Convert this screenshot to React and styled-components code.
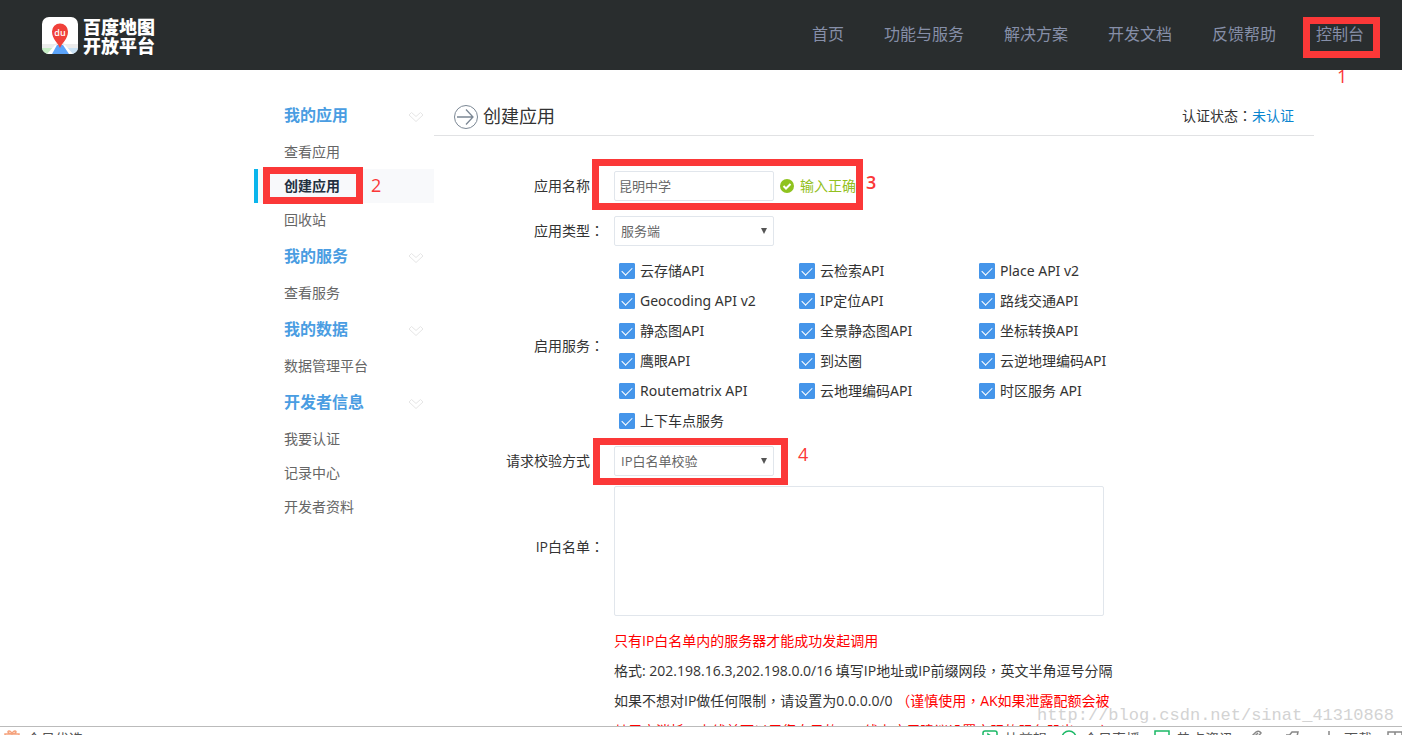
import React from 'react'
import styled, { createGlobalStyle, css } from 'styled-components'

const RED = '#fb3838'

const GlobalStyle = createGlobalStyle`
  * {
    box-sizing: border-box;
  }
  body {
    margin: 0;
    background: #fff;
    color: #333;
    font: 14px/20px 'Open Sans', 'Noto Sans CJK SC', sans-serif;
  }
  a {
    color: inherit;
    text-decoration: none;
  }
  button, input, select, textarea {
    font-family: inherit;
  }
`

const Page = styled.div`
  height: 100vh;
  display: flex;
  flex-direction: column;
  overflow: hidden;
  position: relative;
`

/* header */

const Header = styled.header`
  flex: 0 0 70px;
  display: flex;
  align-items: center;
  justify-content: space-between;
  padding: 0 38px 0 42px;
  background: #292d2e;
`

const Logo = styled.a`
  display: flex;
  align-items: center;
  gap: 5px;
  padding-top: 2px;
  color: #fff;
  font: 900 18px/19px 'Noto Sans CJK SC', sans-serif;
`

const LogoText = styled.span`
  display: flex;
  flex-direction: column;
`

const Nav = styled.nav`
  display: flex;
  gap: 40px;
  color: #868fa8;
  font-size: 16px;
  line-height: 24px;
  padding-bottom: 2px;
`

const NavLink = styled.a`
  position: relative;
`

/* numbered red marks laid over the page */

const Mark = styled.span`
  position: absolute;
  z-index: 2;
  top: ${p => p.$top}px;
  left: ${p => p.$left}px;
  width: ${p => p.$width}px;
  height: ${p => p.$height}px;
  border: 7px solid ${RED};
  pointer-events: none;
`

const MarkNumber = styled.span`
  position: absolute;
  z-index: 2;
  top: ${p => p.$top}px;
  left: ${p => p.$left}px;
  color: ${RED};
  font-size: 18px;
  font-weight: ${p => (p.$bold ? 600 : 400)};
  line-height: 20px;
`

/* sidebar */

const Body = styled.div`
  flex: 1;
  min-height: 0;
  overflow: hidden;
  display: flex;
  padding: 26px 88px 0 254px;
`

const Sidebar = styled.aside`
  flex: 0 0 180px;
`

const GroupTitle = styled.button`
  display: flex;
  align-items: center;
  justify-content: space-between;
  width: 100%;
  height: 39px;
  padding: 0 10px 2px 30px;
  border: 0;
  background: none;
  color: #4a9de2;
  font-size: 16px;
  font-weight: 700;
  line-height: 24px;
`

const SideLink = styled.a`
  position: relative;
  display: block;
  padding-left: 30px;
  color: #666;
  line-height: 34px;
  ${p => p.$active && css`
    padding-left: 26px;
    border-left: 4px solid #0bb5ec;
    background: #f8f9fb;
    color: #22303f;
    font-weight: 700;
  `}
`

/* content */

const Content = styled.main`
  flex: 1;
  min-width: 0;
`

const TitleBar = styled.div`
  display: flex;
  align-items: center;
  justify-content: space-between;
  height: 40px;
  padding: 0 20px;
  border-bottom: 1px solid #e1e2e4;
`

const Title = styled.h1`
  display: flex;
  align-items: center;
  gap: 5px;
  margin: 0;
  font-size: 18px;
  font-weight: 400;
  line-height: 24px;
`

const BlueLink = styled.a`
  color: #0a85d0;
`

/* the traditional face centres its punctuation */
const Centered = styled.span`
  font-family: 'Noto Sans CJK TC', sans-serif;
  line-height: 1;
`

const Form = styled.form`
  display: grid;
  gap: 10px;
  padding-top: 35px;
`

const Row = styled.div`
  position: relative;
  display: grid;
  grid-template-columns: 170px 1fr;
  column-gap: 10px;
  align-items: center;
  margin-bottom: ${p => (p.$loose ? 5 : 0)}px;
`

const Label = styled.label`
  text-align: right;
  padding-bottom: ${p => (p.$raised ? 8 : 0)}px;
`

const Field = styled.div`
  display: flex;
  align-items: center;
`

const control = css`
  border: 1px solid #e1e6ec;
  border-radius: 2px;
  background: #fff;
  color: #666;
  font-size: 13px;
  outline: 0;
`

const TextInput = styled.input`
  ${control}
  width: 160px;
  height: 30px;
  padding: 0 4px 2px;
`

const SelectBox = styled.span`
  position: relative;
  display: inline-flex;

  &::after {
    content: '';
    position: absolute;
    top: 12px;
    right: 7px;
    border: 3px solid transparent;
    border-top: 6px solid #555;
    border-bottom: 0;
    pointer-events: none;
  }
`

const Select = styled.select`
  ${control}
  appearance: none;
  width: 160px;
  height: 30px;
  padding: 0 20px 0 6px;
`

const Valid = styled.span`
  display: flex;
  align-items: center;
  gap: 6px;
  margin-left: 6px;
  color: #92c020;
`

const Services = styled.div`
  display: grid;
  grid-template-columns: repeat(3, 180px);
  padding-left: 5px;
  font-family: 'Noto Sans', 'Noto Sans CJK SC', sans-serif;
`

const Service = styled.label`
  display: flex;
  align-items: center;
  gap: 5px;
  height: 30px;
`

const Check = styled.input`
  appearance: none;
  width: 16px;
  height: 16px;
  margin: 0;
  border: 1px solid #4595ea;
  border-radius: 1px;
  display: grid;
  place-items: center;

  &:checked {
    background: #4595ea;
  }
  &:checked::after {
    content: '';
    width: 9px;
    height: 5px;
    border: solid #fff;
    border-width: 0 0 1px 1px;
    transform: translateY(-1px) rotate(-45deg);
  }
`

const TextArea = styled.textarea`
  ${control}
  display: block;
  width: 490px;
  height: 130px;
  resize: none;
`

const Hints = styled.div`
  margin-left: 180px;
  width: 500px;
  line-height: 30px;
`

const Hint = styled.p`
  margin: 0;
  white-space: nowrap;
`

const Warn = styled.span`
  color: #f00;
`

/* browser bar, mostly below the fold */

const BottomBar = styled.footer`
  flex: 0 0 9px;
  display: flex;
  justify-content: space-between;
  align-items: flex-start;
  overflow: hidden;
  padding: 2px 0 0 4px;
  border-top: 1px solid #bbb;
  color: #555;
`

const BarGroup = styled.div`
  display: flex;
  gap: 14px;
`

const BarItem = styled.a`
  display: flex;
  gap: 7px;
`

const BarTool = styled.a`
  display: flex;
  padding-right: 7px;
`

const Watermark = styled.span`
  position: absolute;
  right: 8px;
  bottom: 7px;
  z-index: 3;
  color: #d3d3d3;
  font: 17px/24px 'Liberation Mono', monospace;
`

const LogoIcon = () => (
  <svg width="36" height="38" viewBox="0 0 36 38">
    <defs>
      <clipPath id="tile"><rect x="0" y="0" width="36" height="37" rx="7" /></clipPath>
    </defs>
    <g clipPath="url(#tile)">
      <rect width="36" height="37" fill="#fff" />
      <path d="M0 27 L13 27 L18 24 L23 27 L36 27 V31 H0Z" fill="#ececec" />
      <path d="M0 31 H12 L6 37 H0Z" fill="#c4ecc4" />
      <path d="M36 31 H24 L30 37 H36Z" fill="#c9e2f5" />
      <path d="M13 28 H23 L31 37 H5Z" fill="#fff" />
      <path d="M15 28 H21 L27 37 H10Z" fill="#5ba4fa" />
      <path d="M18 31 C16 26 10 22 10 14.5 A8 8 0 0 1 26 14.5 C26 22 20 26 18 31Z" fill="#f0413a" />
    </g>
    <text x="18" y="19" textAnchor="middle" fill="#fff" fontFamily="Open Sans, sans-serif" fontSize="9" fontWeight="600">du</text>
  </svg>
)

const Chevron = () => (
  <svg width="16" height="18" viewBox="0 0 16 18" fill="#fff" stroke="#e6e6e6">
    <path d="M3.5 6.5 L8 10.5 L12.5 6.5 L15 9 L8 15.5 L1 9Z" strokeLinejoin="round" />
  </svg>
)

const ArrowIcon = () => (
  <svg width="24" height="26" viewBox="0 0 24 26" fill="none" stroke="#7b8794">
    <circle cx="12" cy="14" r="11.5" />
    <path d="M3 14 H18.5 M12 6.5 L19 14 L12 21.5" strokeWidth="1.3" />
  </svg>
)

const ValidIcon = () => (
  <svg width="14" height="14" viewBox="0 0 14 14">
    <circle cx="7" cy="7" r="7" fill="#8fc31f" />
    <path d="M3.5 7 L6 9.5 L10.5 5" fill="none" stroke="#fff" strokeWidth="2" />
  </svg>
)

const BarIcon = ({ color = '#888', children }) => (
  <svg width="16" height="16" viewBox="0 0 16 16" fill="none" stroke={color} strokeWidth="1.5">
    {children}
  </svg>
)

const nav = ['首页', '功能与服务', '解决方案', '开发文档', '反馈帮助', '控制台']

const groups = [
  { title: '我的应用', items: ['查看应用', '创建应用', '回收站'] },
  { title: '我的服务', items: ['查看服务'] },
  { title: '我的数据', items: ['数据管理平台'] },
  { title: '开发者信息', items: ['我要认证', '记录中心', '开发者资料'] },
]

const services = [
  '云存储API', '云检索API', 'Place API v2',
  'Geocoding API v2', 'IP定位API', '路线交通API',
  '静态图API', '全景静态图API', '坐标转换API',
  '鹰眼API', '到达圈', '云逆地理编码API',
  'Routematrix API', '云地理编码API', '时区服务 API',
  '上下车点服务',
]

export default function App() {
  return (
    <Page>
      <GlobalStyle />
      <Header>
        <Logo href="#">
          <LogoIcon />
          <LogoText>
            <span>百度地图</span>
            <span>开放平台</span>
          </LogoText>
        </Logo>
        <Nav>
          {nav.map(name => (
            <NavLink key={name} href="#">
              {name}
              {name === '控制台' && (
                <>
                  <Mark $top={-5} $left={-13} $width={77} $height={41} />
                  <MarkNumber $top={44} $left={21}>1</MarkNumber>
                </>
              )}
            </NavLink>
          ))}
        </Nav>
      </Header>

      <Body>
        <Sidebar>
          {groups.map(group => (
            <div key={group.title}>
              <GroupTitle type="button">
                {group.title}
                <Chevron />
              </GroupTitle>
              {group.items.map(item => (
                <SideLink key={item} href="#" $active={item === '创建应用'}>
                  {item}
                  {item === '创建应用' && (
                    <>
                      <Mark $top={-2} $left={5} $width={100} $height={37} />
                      <MarkNumber $top={6} $left={113}>2</MarkNumber>
                    </>
                  )}
                </SideLink>
              ))}
            </div>
          ))}
        </Sidebar>

        <Content>
          <TitleBar>
            <Title><ArrowIcon />创建应用</Title>
            <span>认证状态<Centered>：</Centered><BlueLink href="#">未认证</BlueLink></span>
          </TitleBar>

          <Form>
            <Row $loose>
              <Label htmlFor="name">应用名称<Centered>：</Centered></Label>
              <Field>
                <TextInput id="name" defaultValue="昆明中学" />
                <Valid><ValidIcon />输入正确</Valid>
              </Field>
              <Mark $top={-12} $left={158} $width={271} $height={51} />
              <MarkNumber $top={1} $left={432} $bold>3</MarkNumber>
            </Row>
            <Row>
              <Label htmlFor="type">应用类型<Centered>：</Centered></Label>
              <Field>
                <SelectBox>
                  <Select id="type"><option>服务端</option></Select>
                </SelectBox>
              </Field>
            </Row>
            <Row role="group" aria-labelledby="services">
              <Label as="span" id="services">启用服务<Centered>：</Centered></Label>
              <Services>
                {services.map(name => (
                  <Service key={name}>
                    <Check type="checkbox" defaultChecked />
                    {name}
                  </Service>
                ))}
              </Services>
            </Row>
            <Row>
              <Label htmlFor="verify">请求校验方式<Centered>：</Centered></Label>
              <Field>
                <SelectBox>
                  <Select id="verify"><option>IP白名单校验</option></Select>
                </SelectBox>
              </Field>
              <Mark $top={-8} $left={159} $width={195} $height={47} />
              <MarkNumber $top={-2} $left={364}>4</MarkNumber>
            </Row>
            <Row>
              <Label htmlFor="whitelist" $raised>IP白名单<Centered>：</Centered></Label>
              <TextArea id="whitelist" />
            </Row>
            <Hints>
              <Hint><Warn>只有IP白名单内的服务器才能成功发起调用</Warn></Hint>
              <Hint>格式: 202.198.16.3,202.198.0.0/16 填写IP地址或IP前缀网段<Centered>，</Centered>英文半角逗号分隔</Hint>
              <Hint>
                如果不想对IP做任何限制<Centered>，</Centered>请设置为0.0.0.0/0{' '}
                <Warn>（谨慎使用<Centered>，</Centered>AK如果泄露配额会被</Warn>
              </Hint>
              <Hint><Warn>其用户消耗，上线前可以用您自己的IP，线上应用建议设置实际的服务器出口IP）</Warn></Hint>
            </Hints>
          </Form>
        </Content>
      </Body>

      <BottomBar>
        <BarItem href="#">
          <BarIcon color="#f5a27c">
            <path d="M1 5 H15 V15 H1Z M8 5 C4 5 3 2 5 2 C7 2 8 5 8 5 C8 5 9 2 11 2 C13 2 12 5 8 5" />
          </BarIcon>
          今日优选
        </BarItem>
        <BarGroup>
          <BarItem href="#">
            <BarIcon color="#1bb866"><rect x="1" y="2" width="14" height="13" rx="2" /><path d="M6 5 L11 8.5 L6 12Z" /></BarIcon>
            快剪辑
          </BarItem>
          <BarItem href="#">
            <BarIcon color="#1bb866"><circle cx="8" cy="9" r="7" /></BarIcon>
            今日直播
          </BarItem>
          <BarItem href="#">
            <BarIcon color="#1bb866"><rect x="1" y="2" width="14" height="13" /></BarIcon>
            热点资讯
          </BarItem>
          <BarTool href="#" aria-label="清理">
            <BarIcon><path d="M2 10 L9 3 Q12 1 14 4 L7 12 M6 9 L11 4" /></BarIcon>
          </BarTool>
          <BarTool href="#" aria-label="加速">
            <BarIcon><path d="M4 8 L8 3 H14 L12 12 M2 6 H6" /></BarIcon>
          </BarTool>
          <BarItem href="#">
            <BarIcon><path d="M8 2 V13 M4 9 L8 13 L12 9" /></BarIcon>
            下载
          </BarItem>
          <BarIcon><path d="M2 3 H16 V14 H2Z M9 3 V14" /></BarIcon>
        </BarGroup>
      </BottomBar>

      <Watermark>http://blog.csdn.net/sinat_41310868</Watermark>
    </Page>
  )
}
